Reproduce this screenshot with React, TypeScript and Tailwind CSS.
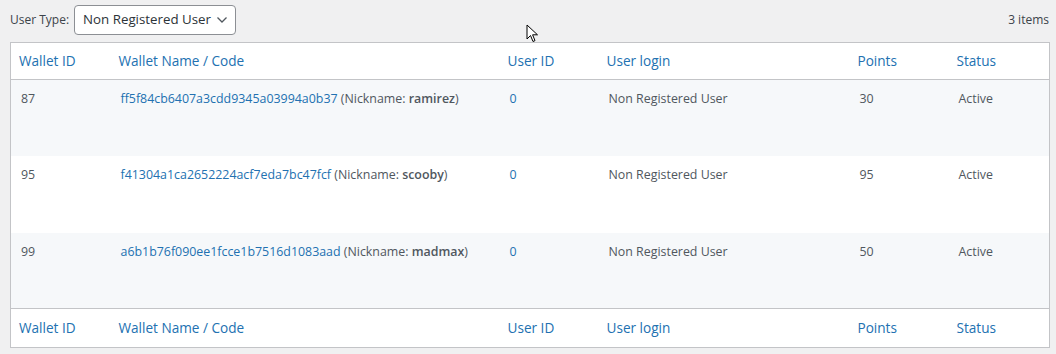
import React from 'react';

const rows = [
  { id: '87', code: 'ff5f84cb6407a3cdd9345a03994a0b37', nick: 'ramirez', userId: '0', login: 'Non Registered User', points: '30', status: 'Active', h: 'h-[76px]' },
  { id: '95', code: 'f41304a1ca2652224acf7eda7bc47fcf', nick: 'scooby', userId: '0', login: 'Non Registered User', points: '95', status: 'Active', h: 'h-[77px]' },
  { id: '99', code: 'a6b1b76f090ee1fcce1b7516d1083aad', nick: 'madmax', userId: '0', login: 'Non Registered User', points: '50', status: 'Active', h: 'h-[76px]' },
];

const headers = ['Wallet ID', 'Wallet Name / Code', 'User ID', 'User login', 'Points', 'Status'];

function HeadRow({ top }: { top?: boolean }) {
  return (
    <tr className={top ? 'border-b border-[#c3c4c7]' : 'border-t border-[#c3c4c7]'}>
      {headers.map((h) => (
        <th key={h} className={`${top ? 'h-[37px]' : 'h-[39px]'} px-2 text-left text-[13.6px] font-normal text-[#2271b1] align-middle`}>
          {h}
        </th>
      ))}
    </tr>
  );
}

function Cursor() {
  return (
    <svg className="absolute left-[526px] top-[24px]" width="13" height="20" viewBox="0 0 13 20">
      <path d="M1 1 L1 15 L4.5 11.5 L7 17.5 L9 16.6 L6.6 10.8 L11.5 10.8 Z" fill="#fff" stroke="#000" strokeWidth="1" strokeLinejoin="round" />
    </svg>
  );
}

export default function App() {
  return (
    <div className="relative min-h-[354px] bg-[#f0f0f1] text-[12.4px] text-[#3c434a]" style={{ fontFamily: '"Open Sans", "Noto Sans", sans-serif' }}>
      <div className="flex items-center justify-between pl-[10px] pr-[7px] pt-[5px]">
        <div className="flex items-center gap-[5px]">
          <label className="text-[12px] text-[#3c434a]">User Type:</label>
          <div className="flex h-[30px] w-[162px] items-center justify-between rounded-[4px] border border-[#8c8f94] bg-white pl-[8px] pr-[7px] text-[13.3px] text-[#2c3338]">
            <span>Non Registered User</span>
            <svg width="12" height="8" viewBox="0 0 12 8">
              <path d="M1.5 1.5 L6 6 L10.5 1.5" fill="none" stroke="#50575e" strokeWidth="1.3" />
            </svg>
          </div>
        </div>
        <span className="text-[12px] text-[#3c434a]">3 items</span>
      </div>

      <div className="pl-[10px] pr-[6px] pt-[7px]">
        <table className="w-full table-fixed border-collapse border border-[#c3c4c7] bg-white">
          <colgroup>
            <col className="w-[100px]" />
            <col className="w-[389px]" />
            <col className="w-[99px]" />
            <col className="w-[251px]" />
            <col className="w-[99px]" />
            <col />
          </colgroup>
          <thead>
            <HeadRow top />
          </thead>
          <tbody>
            {rows.map((r, i) => (
              <tr key={r.id} className={i % 2 === 0 ? 'bg-[#f6f8fa]' : 'bg-white'}>
                <td className={`${r.h} px-[10px] pt-[10px] align-top text-[#50575e]`}>{r.id}</td>
                <td className="px-[10px] pt-[10px] align-top text-[#50575e]">
                  <span className="text-[#2271b1]">{r.code}</span> (Nickname: <b className="font-semibold text-[#50575e]">{r.nick}</b>)
                </td>
                <td className="px-[10px] pt-[10px] align-top text-[#2271b1]">{r.userId}</td>
                <td className="px-[10px] pt-[10px] align-top text-[#50575e]">{r.login}</td>
                <td className="px-[10px] pt-[10px] align-top text-[#50575e]">{r.points}</td>
                <td className="px-[10px] pt-[10px] align-top text-[#50575e]">{r.status}</td>
              </tr>
            ))}
          </tbody>
          <tfoot>
            <HeadRow />
          </tfoot>
        </table>
      </div>
      <Cursor />
    </div>
  );
}
